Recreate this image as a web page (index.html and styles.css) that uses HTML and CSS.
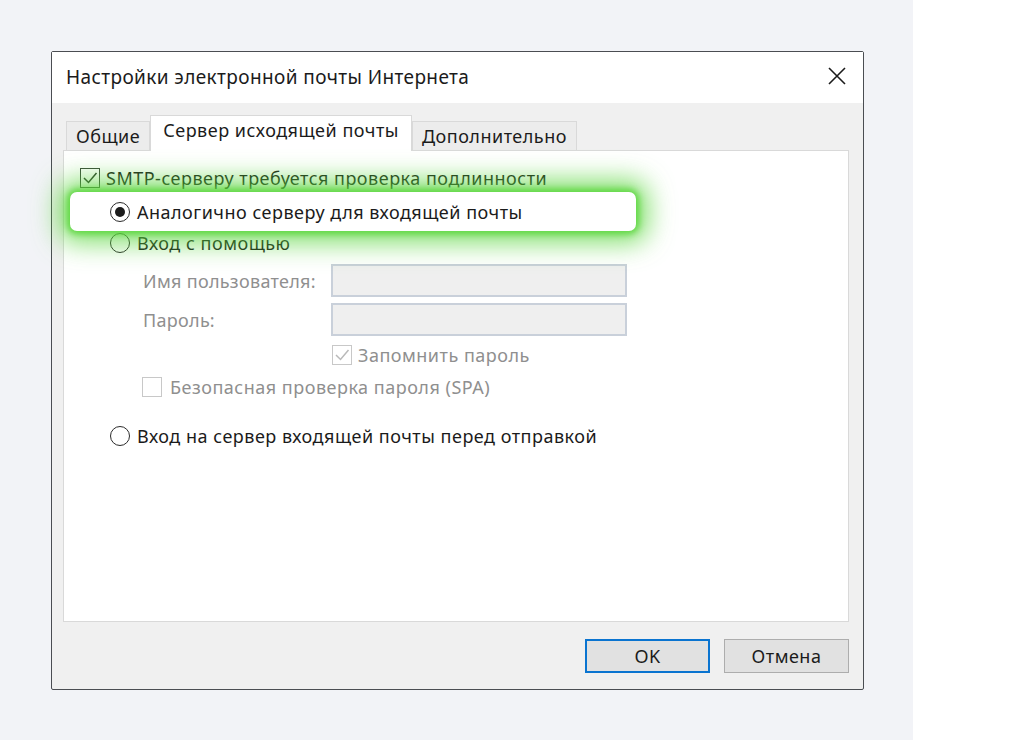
FILE: index.html
```html
<!DOCTYPE html>
<html>
<head>
  <title>Настройки электронной почты Интернета</title>
  <link rel="stylesheet" href="styles.css">
</head>
<body>
  <div class="stage">
    <div class="dialog">
      <div class="titlebar">
        <span class="title">Настройки электронной почты Интернета</span>
        <svg class="close" width="20" height="20" viewBox="0 0 20 20">
          <path d="M2 2 L18 18 M18 2 L2 18" stroke="#1b1b1b" stroke-width="1.6" fill="none"/>
        </svg>
      </div>
      <div class="dialog-body">
        <div class="tabs">
          <div class="tab">Общие</div>
          <div class="tab tab-active">Сервер исходящей почты</div>
          <div class="tab">Дополнительно</div>
        </div>
        <div class="panel">
          <div class="row row-top">
            <span class="check">
              <svg width="20" height="20" viewBox="0 0 20 20"><path d="M4 10 L8.5 14.5 L16.5 5" stroke="#2a3a2a" stroke-width="1.5" fill="none"/></svg>
            </span>
            <span class="label-text">SMTP-серверу требуется проверка подлинности</span>
          </div>
          <div class="highlight">
            <span class="radio radio-on"></span>
            <span class="label-text">Аналогично серверу для входящей почты</span>
          </div>
          <div class="row row-indent">
            <span class="radio"></span>
            <span class="label-text">Вход с помощью</span>
          </div>
          <div class="field-row field-first">
            <span class="field-label">Имя пользователя:</span>
            <span class="input"></span>
          </div>
          <div class="field-row">
            <span class="field-label">Пароль:</span>
            <span class="input"></span>
          </div>
          <div class="row row-remember">
            <span class="check check-off">
              <svg width="20" height="20" viewBox="0 0 20 20"><path d="M4 10 L8.5 14.5 L16.5 5" stroke="#b9b9b9" stroke-width="1.5" fill="none"/></svg>
            </span>
            <span class="label-text muted">Запомнить пароль</span>
          </div>
          <div class="row row-spa">
            <span class="check check-off"></span>
            <span class="label-text muted">Безопасная проверка пароля (SPA)</span>
          </div>
          <div class="row row-indent row-last">
            <span class="radio"></span>
            <span class="label-text">Вход на сервер входящей почты перед отправкой</span>
          </div>
        </div>
        <div class="footer">
          <div class="btn btn-default">OK</div>
          <div class="btn">Отмена</div>
        </div>
      </div>
    </div>
  </div>
  <div class="side"></div>
</body>
</html>
```

FILE: styles.css
```css
body {
  margin: 0;
  display: flex;
  height: 740px;
  overflow: hidden;
  font-family: "Noto Sans", "Open Sans", sans-serif;
  font-size: 18px;
  letter-spacing: 0.5px;
  color: #1b1b1b;
}
.stage {
  width: 913px;
  background: #f2f3f7;
  padding: 51px 0 0 51px;
  box-sizing: border-box;
}
.side {
  flex: 1;
  background: #ffffff;
}
.dialog {
  width: 813px;
  height: 639px;
  box-sizing: border-box;
  border: 1px solid #4a4d52;
  border-radius: 2px;
  background: #f0f0f0;
  display: flex;
  flex-direction: column;
}
.titlebar {
  height: 51px;
  background: #ffffff;
  display: flex;
  align-items: center;
  justify-content: space-between;
  padding: 0 16px 0 14px;
}
.title {
  font-size: 19px;
  letter-spacing: 0.4px;
  margin-top: -1px;
}
.close {
  margin-top: -4px;
}
.dialog-body {
  flex: 1;
  padding: 0 14px 0 11px;
  display: flex;
  flex-direction: column;
}
.tabs {
  height: 47px;
  display: flex;
  align-items: flex-end;
  padding-left: 3px;
}
.tab {
  height: 29px;
  box-sizing: border-box;
  border: 1px solid #d9d9d9;
  border-bottom: none;
  background: #ececec;
  padding: 0 9px;
  display: flex;
  align-items: center;
}
.tab-active {
  height: 36px;
  background: #ffffff;
  padding: 2px 12px 0;
  margin-bottom: -1px;
  position: relative;
  z-index: 1;
  align-items: flex-start;
}
.panel {
  height: 472px;
  box-sizing: border-box;
  border: 1px solid #d9d9d9;
  background: #ffffff;
  padding: 12px 0 0 16px;
}
.row {
  height: 32px;
  display: flex;
  align-items: center;
  gap: 6px;
}
.row-top {
  height: 29px;
}
.row-indent {
  padding-left: 30px;
  gap: 7px;
}
.label-text {
  white-space: nowrap;
}
.muted {
  color: #8f8f8f;
}
.check {
  width: 20px;
  height: 20px;
  box-sizing: border-box;
  border: 1px solid #3a4a3a;
  display: flex;
  align-items: center;
  justify-content: center;
  flex: none;
}
.check svg {
  margin: -1px;
}
.check-off {
  border-color: #c8c8c8;
  background: #ffffff;
}
.radio {
  width: 20px;
  height: 20px;
  box-sizing: border-box;
  border: 1.5px solid #2b2b2b;
  border-radius: 50%;
  display: flex;
  align-items: center;
  justify-content: center;
  flex: none;
}
.radio-on::after {
  content: "";
  width: 10px;
  height: 10px;
  border-radius: 50%;
  background: #1b1b1b;
}
.highlight {
  position: relative;
  z-index: 2;
  height: 39px;
  width: 566px;
  box-sizing: border-box;
  margin: 0 0 -4px -10px;
  padding-left: 40px;
  background: #ffffff;
  border-radius: 7px;
  display: flex;
  align-items: center;
  gap: 7px;
  box-shadow: 0 0 6px 3px rgba(90, 214, 60, 0.9), 0 0 26px 12px rgba(90, 214, 60, 0.75);
}
.field-row {
  display: flex;
  align-items: center;
  height: 33px;
  margin-top: 6px;
  padding-left: 63px;
}
.field-first {
  margin-top: 5px;
}
.field-label {
  width: 188px;
  color: #8f8f8f;
  white-space: nowrap;
  letter-spacing: 0.3px;
}
.input {
  width: 296px;
  height: 33px;
  box-sizing: border-box;
  border: 2px solid #c9d0da;
  background: #efefef;
}
.row-remember {
  margin-top: 3px;
  padding-left: 252px;
}
.row-spa {
  padding-left: 62px;
  gap: 8px;
}
.row-last {
  margin-top: 17px;
}
.footer {
  flex: 1;
  display: flex;
  justify-content: flex-end;
  align-items: flex-start;
  padding-top: 17px;
  gap: 14px;
}
.btn {
  width: 125px;
  height: 34px;
  box-sizing: border-box;
  border: 1px solid #adadad;
  background: #e1e1e1;
  display: flex;
  align-items: center;
  justify-content: center;
}
.btn-default {
  border: 2px solid #0a74d0;
}
```
